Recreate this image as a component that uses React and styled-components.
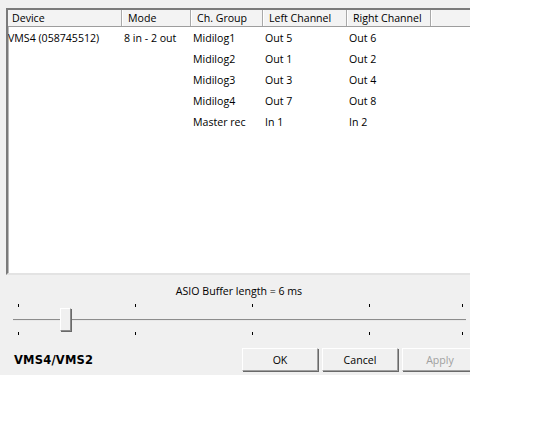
import React from "react";
import styled, { createGlobalStyle } from "styled-components";

const Global = createGlobalStyle`
  html, body { margin: 0; padding: 0; background: #ffffff; }
  body { font-family: "Open Sans", "Noto Sans", sans-serif; font-size: 10.6px; color: #000; }
`;

const Dialog = styled.div`
  width: 470px;
  height: 375px;
  background: #f0f0f0;
  display: flex;
  flex-direction: column;
  overflow: hidden;
`;

const ListBox = styled.div`
  margin: 8px 0 0 6px;
  height: 263px;
  background: #ffffff;
  border-top: 2px solid #7a7a7a;
  border-left: 2px solid #7a7a7a;
  border-bottom: 2px solid #e3e3e3;
  box-shadow: inset 1px 1px 0 #b9b9b9;
  overflow: hidden;
  flex-shrink: 0;
`;

const COLS = "114px 69px 72px 84px 84px 1fr";

const Header = styled.div`
  display: grid;
  grid-template-columns: ${COLS};
  height: 16px;
  background: #f3f3f3;
  border-bottom: 1px solid #9d9d9d;
`;

const HeadCell = styled.div`
  display: flex;
  align-items: center;
  padding-left: ${(p) => (p.$first ? 4 : 6)}px;
  border-right: ${(p) => (p.$last ? "none" : "1px solid #a9a9a9")};
  box-shadow: ${(p) => (p.$last ? "none" : "1px 0 0 #fff")};
  white-space: nowrap;
  line-height: 16px;
`;

const Rows = styled.div`
  padding-top: 0;
`;

const Row = styled.div`
  display: grid;
  grid-template-columns: ${COLS};
  height: 21px;
  align-items: center;
`;

const Cell = styled.div`
  padding-left: ${(p) => (p.$first ? 0 : 2)}px;
  white-space: nowrap;
`;

const BufferLabel = styled.div`
  margin-top: 8px;
  text-align: center;
  padding-left: 8px;
  line-height: 16px;
  flex-shrink: 0;
`;

const SliderArea = styled.div`
  margin-top: 5px;
  display: flex;
  flex-direction: column;
  flex-shrink: 0;
`;

const TickRow = styled.div`
  display: flex;
  height: 3px;
`;

const Tick = styled.div`
  width: 1px;
  height: 3px;
  background: #000;
  margin-left: ${(p) => p.$offset}px;
`;

const Track = styled.div`
  position: relative;
  margin: 0 4px 0 13px;
  height: 25px;
  display: flex;
  align-items: center;
`;

const Groove = styled.div`
  flex: 1;
  height: 1px;
  background: #8c8c8c;
  border-bottom: 1px solid #e8e8e8;
`;

const Thumb = styled.div`
  position: absolute;
  left: 47px;
  top: 1px;
  width: 9px;
  height: 21px;
  background: #f0f0f0;
  border-top: 1px solid #fff;
  border-left: 1px solid #fff;
  border-right: 1px solid #8c8c8c;
  border-bottom: 1px solid #8c8c8c;
  box-shadow: 1px 1px 0 #696969;
`;

const Footer = styled.div`
  margin-top: 13px;
  display: flex;
  align-items: center;
  height: 23px;
  flex-shrink: 0;
`;

const Brand = styled.div`
  font-family: "DejaVu Sans", Verdana, sans-serif;
  font-weight: 700;
  font-size: 11.5px;
  margin-left: 14px;
  width: 228px;
  flex-shrink: 0;
  letter-spacing: 0.2px;
`;

const Buttons = styled.div`
  display: flex;
  gap: 4px;
  flex-shrink: 0;
`;

const Button = styled.button`
  width: 76px;
  height: 23px;
  padding: 0;
  font-family: "Open Sans", "Noto Sans", sans-serif;
  font-size: 10.6px;
  color: ${(p) => (p.disabled ? "#a0a0a0" : "#000")};
  background: #f0f0f0;
  border-top: 1px solid #ffffff;
  border-left: 1px solid #ffffff;
  border-right: 1px solid #a0a0a0;
  border-bottom: 1px solid #a0a0a0;
  box-shadow: 1px 1px 0 #696969;
  flex-shrink: 0;
`;

const headers = ["Device", "Mode", "Ch. Group", "Left Channel", "Right Channel", ""];
const rows = [
  ["VMS4 (058745512)", "8 in - 2 out", "Midilog1", "Out 5", "Out 6"],
  ["", "", "Midilog2", "Out 1", "Out 2"],
  ["", "", "Midilog3", "Out 3", "Out 4"],
  ["", "", "Midilog4", "Out 7", "Out 8"],
  ["", "", "Master rec", "In 1", "In 2"],
];
const tickOffsets = [18, 116, 116, 116, 92];

function Ticks() {
  return (
    <TickRow>
      {tickOffsets.map((o, i) => (
        <Tick key={i} $offset={o} />
      ))}
    </TickRow>
  );
}

export default function App() {
  return (
    <>
      <Global />
      <Dialog>
        <ListBox>
          <Header>
            {headers.map((h, i) => (
              <HeadCell key={i} $first={i === 0} $last={i === headers.length - 1}>
                {h}
              </HeadCell>
            ))}
          </Header>
          <Rows>
            {rows.map((r, i) => (
              <Row key={i}>
                {r.map((c, j) => (
                  <Cell key={j} $first={j === 0}>
                    {c}
                  </Cell>
                ))}
              </Row>
            ))}
          </Rows>
        </ListBox>
        <BufferLabel>ASIO Buffer length = 6 ms</BufferLabel>
        <SliderArea>
          <Ticks />
          <Track>
            <Groove />
            <Thumb />
          </Track>
          <Ticks />
        </SliderArea>
        <Footer>
          <Brand>VMS4/VMS2</Brand>
          <Buttons>
            <Button>OK</Button>
            <Button>Cancel</Button>
            <Button disabled>Apply</Button>
          </Buttons>
        </Footer>
      </Dialog>
    </>
  );
}
